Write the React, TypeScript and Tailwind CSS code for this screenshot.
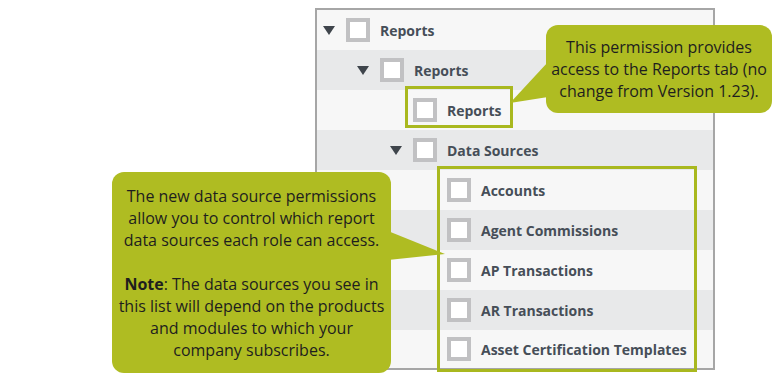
import React from 'react';

// One row of the permission tree
interface TreeRow {
  label: string;
  level: number;
  expandable: boolean;
}

const rows: TreeRow[] = [
  { label: 'Reports', level: 0, expandable: true },
  { label: 'Reports', level: 1, expandable: true },
  { label: 'Reports', level: 2, expandable: false },
  { label: 'Data Sources', level: 2, expandable: true },
  { label: 'Accounts', level: 3, expandable: false },
  { label: 'Agent Commissions', level: 3, expandable: false },
  { label: 'AP Transactions', level: 3, expandable: false },
  { label: 'AR Transactions', level: 3, expandable: false },
  { label: 'Asset Certification Templates', level: 3, expandable: false },
];

const indentClass = ['pl-[6px]', 'pl-[40px]', 'pl-[73px]', 'pl-[107px]'];

const Caret: React.FC = () => (
  <svg width="12" height="9" viewBox="0 0 12 9" className="mr-[11px] shrink-0">
    <polygon points="0,0 12,0 6,9" fill="#3f454c" />
  </svg>
);

const App: React.FC = () => {
  return (
    <div
      className="relative w-[778px] h-[378px] bg-white overflow-hidden"
      style={{ fontFamily: '"Open Sans", "Noto Sans", sans-serif' }}
    >
      {/* Permission tree panel */}
      <div className="relative ml-[315px] mt-[8px] w-[400px] border-2 border-[#a6a6a6]">
        {rows.map((row, i) => (
          <div
            key={i}
            className={`flex items-center ${i === rows.length - 1 ? 'h-[38px]' : 'h-[40px]'} ${
              i % 2 === 0 ? 'bg-[#f7f7f7]' : 'bg-[#e8e9ea]'
            } ${indentClass[row.level]}`}
          >
            {row.expandable ? <Caret /> : <span className="w-[23px] shrink-0" />}
            <span className="w-[24px] h-[24px] border-4 border-[#c1c1c3] bg-white shrink-0" />
            <span className="ml-[10px] text-[14px] font-bold text-[#464e58]">{row.label}</span>
          </div>
        ))}

        {/* Highlight frames */}
        <div className="absolute left-[88px] top-[76px] w-[108px] h-[42px] border-[3px] border-[#a9b81f]" />
        <div className="absolute left-[120px] top-[156px] w-[260px] h-[206px] border-[3px] border-[#a9b81f]" />
      </div>

      {/* Callout tails */}
      <svg className="absolute left-0 top-0" width="778" height="378">
        <polygon points="548,62 510,103 548,97" fill="#afbc22" />
        <polygon points="388,231 445,254 388,260" fill="#afbc22" />
      </svg>

      {/* Callout: reports tab */}
      <div className="absolute left-[546px] top-[25px] w-[226px] h-[88px] rounded-[12px] bg-[#afbc22] flex items-center justify-center text-center text-[16px] leading-[22px] text-[#1e1e1e] whitespace-nowrap">
        <p>
          This permission provides
          <br />
          access to the Reports tab (no
          <br />
          change from Version 1.23).
        </p>
      </div>

      {/* Callout: data sources */}
      <div className="absolute left-[112px] top-[172px] w-[279px] h-[201px] rounded-[12px] bg-[#afbc22] flex items-center justify-center text-center text-[16px] leading-[22px] text-[#1e1e1e] whitespace-nowrap">
        <div>
          <p>
            The new data source permissions
            <br />
            allow you to control which report
            <br />
            data sources each role can access.
          </p>
          <p className="mt-[22px]">
            <span className="font-bold">Note</span>: The data sources you see in
            <br />
            this list will depend on the products
            <br />
            and modules to which your
            <br />
            company subscribes.
          </p>
        </div>
      </div>
    </div>
  );
};

export default App;
